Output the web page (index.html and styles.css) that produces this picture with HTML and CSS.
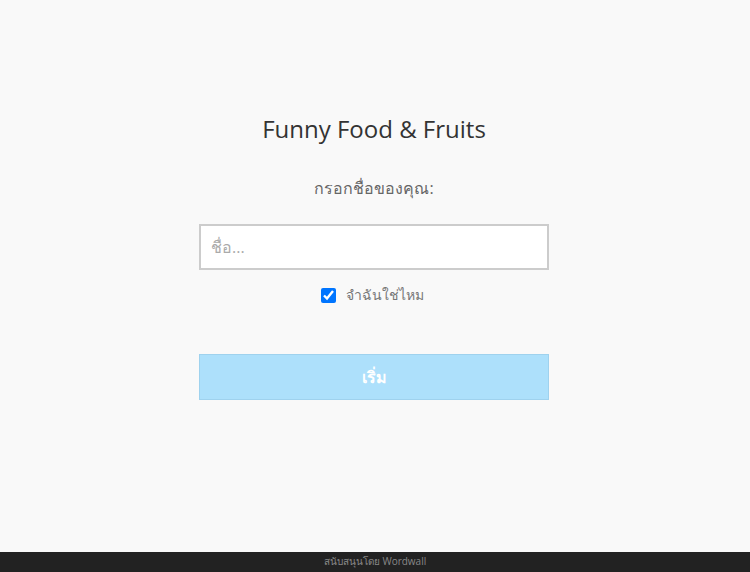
FILE: index.html
```html
<!DOCTYPE html>
<html lang="th">
<head>
<meta charset="utf-8">
<title>Funny Food &amp; Fruits</title>
<link rel="stylesheet" href="styles.css">
</head>
<body>
<div class="page">
  <main class="content">
    <h1 class="title">Funny Food &amp; Fruits</h1>
    <div class="prompt">กรอกชื่อของคุณ:</div>
    <input class="name-input" type="text" placeholder="ชื่อ...">
    <label class="remember">
      <input class="remember-box" type="checkbox" checked>
      <span class="remember-text">จำฉันใช่ไหม</span>
    </label>
    <button class="start-btn" type="button">เริ่ม</button>
  </main>
  <footer class="footer">สนับสนุนโดย Wordwall</footer>
</div>
</body>
</html>
```
FILE: styles.css
```css
html, body {
  margin: 0;
  padding: 0;
  background: #f9f9f9;
}
body {
  font-family: "Open Sans", "Noto Sans", sans-serif;
}
.page {
  display: flex;
  flex-direction: column;
  height: 572px;
}
.content {
  flex: 1;
  display: flex;
  flex-direction: column;
  align-items: center;
  padding-top: 112px;
  padding-right: 2px;
}
.title {
  margin: 0;
  font-size: 24px;
  font-weight: 400;
  line-height: 34px;
  color: #333;
}
.prompt {
  margin-top: 30px;
  font-size: 16px;
  line-height: 24px;
  color: #666;
}
.name-input {
  box-sizing: border-box;
  margin-top: 24px;
  width: 350px;
  height: 46px;
  border: 2px solid #ccc;
  background: #fff;
  padding: 0 10px;
  font-family: inherit;
  font-size: 16px;
  color: #333;
  outline: none;
}
.name-input::placeholder {
  color: #aaa;
}
.remember {
  margin-top: 14px;
  margin-right: 4px;
  display: flex;
  align-items: center;
  gap: 10px;
  font-size: 14px;
  color: #777;
}
.remember-box {
  margin: 0;
  width: 15px;
  height: 15px;
  accent-color: #0075ff;
}
.start-btn {
  box-sizing: border-box;
  margin-top: 48px;
  width: 350px;
  height: 46px;
  background: #ade0fb;
  border: 1px solid #9fd2ee;
  color: #fff;
  font-family: inherit;
  font-size: 16px;
  font-weight: 700;
}
.footer {
  height: 20px;
  background: #222;
  color: #888;
  font-size: 10px;
  line-height: 18px;
  text-align: center;
}
```
